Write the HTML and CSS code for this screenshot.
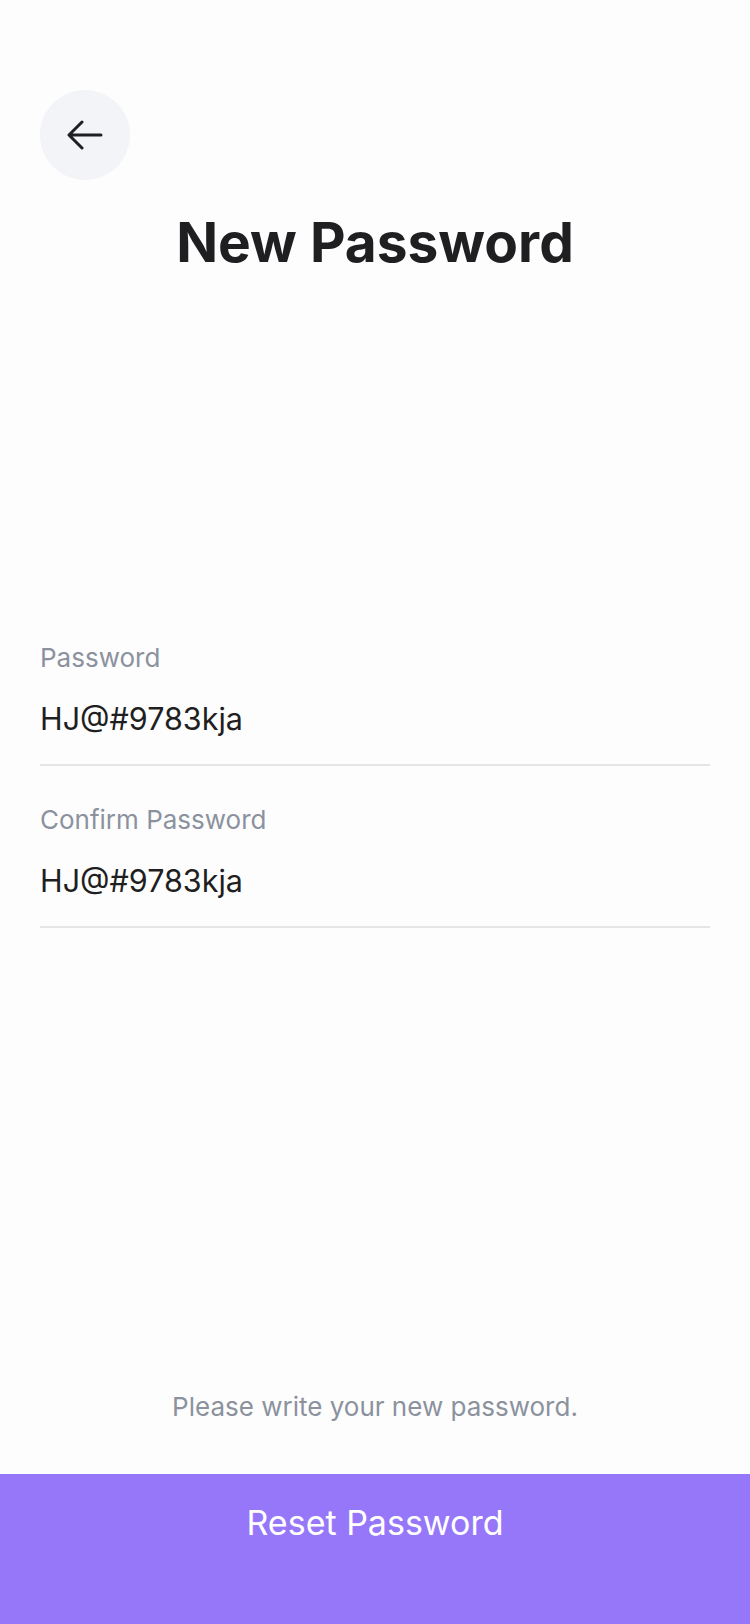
FILE: index.html
```html
<!DOCTYPE html>
<html lang="en">
<head>
<meta charset="utf-8">
<title>New Password</title>
<link rel="stylesheet" href="styles.css">
</head>
<body>
<div class="screen">
  <div class="top">
    <button class="back" aria-label="Back">
      <svg width="36" height="30" viewBox="0 0 36 30" fill="none" stroke="#1f1f22" stroke-width="3" stroke-linecap="round" stroke-linejoin="round">
        <path d="M34 15H3M15 2L2 15l13 13"/>
      </svg>
    </button>
    <h1 class="title">New Password</h1>
  </div>
  <div class="fields">
    <div class="field">
      <div class="label">Password</div>
      <div class="value">HJ@#9783kja</div>
    </div>
    <div class="field">
      <div class="label">Confirm Password</div>
      <div class="value">HJ@#9783kja</div>
    </div>
  </div>
  <div class="spacer"></div>
  <p class="hint">Please write your new password.</p>
  <div class="cta">Reset Password</div>
</div>
</body>
</html>
```
FILE: styles.css
```css
html, body {
  margin: 0;
  padding: 0;
  background: #fdfdfd;
}
.screen {
  width: 750px;
  height: 1624px;
  display: flex;
  flex-direction: column;
  font-family: Inter, "Noto Sans", sans-serif;
  color: #1f1f22;
}
.top {
  padding: 90px 40px 0;
  display: flex;
  flex-direction: column;
}
.back {
  width: 90px;
  height: 90px;
  border-radius: 50%;
  border: none;
  background: #f3f4f7;
  display: flex;
  align-items: center;
  justify-content: center;
  padding: 0;
}
.title {
  margin: 29px 0 0;
  font-size: 55px;
  line-height: 66px;
  font-weight: 700;
  text-align: center;
  color: #1f1f22;
}
.fields {
  margin-top: 368px;
  padding: 0 40px;
  display: flex;
  flex-direction: column;
  gap: 39px;
}
.field {
  border-bottom: 2px solid #e5e5e7;
  padding-bottom: 27px;
  display: flex;
  flex-direction: column;
  gap: 28px;
}
.label {
  font-size: 26px;
  line-height: 30px;
  color: #8b929d;
}
.value {
  font-size: 30.5px;
  line-height: 36px;
  color: #1f1f22;
}
.spacer {
  flex: 1;
}
.hint {
  margin: 0 0 51px;
  text-align: center;
  font-size: 26px;
  line-height: 32px;
  color: #8b929d;
}
.cta {
  height: 150px;
  box-sizing: border-box;
  padding-top: 29px;
  background: #9777f9;
  color: #ffffff;
  text-align: center;
  font-size: 34px;
  line-height: 40px;
}
```
